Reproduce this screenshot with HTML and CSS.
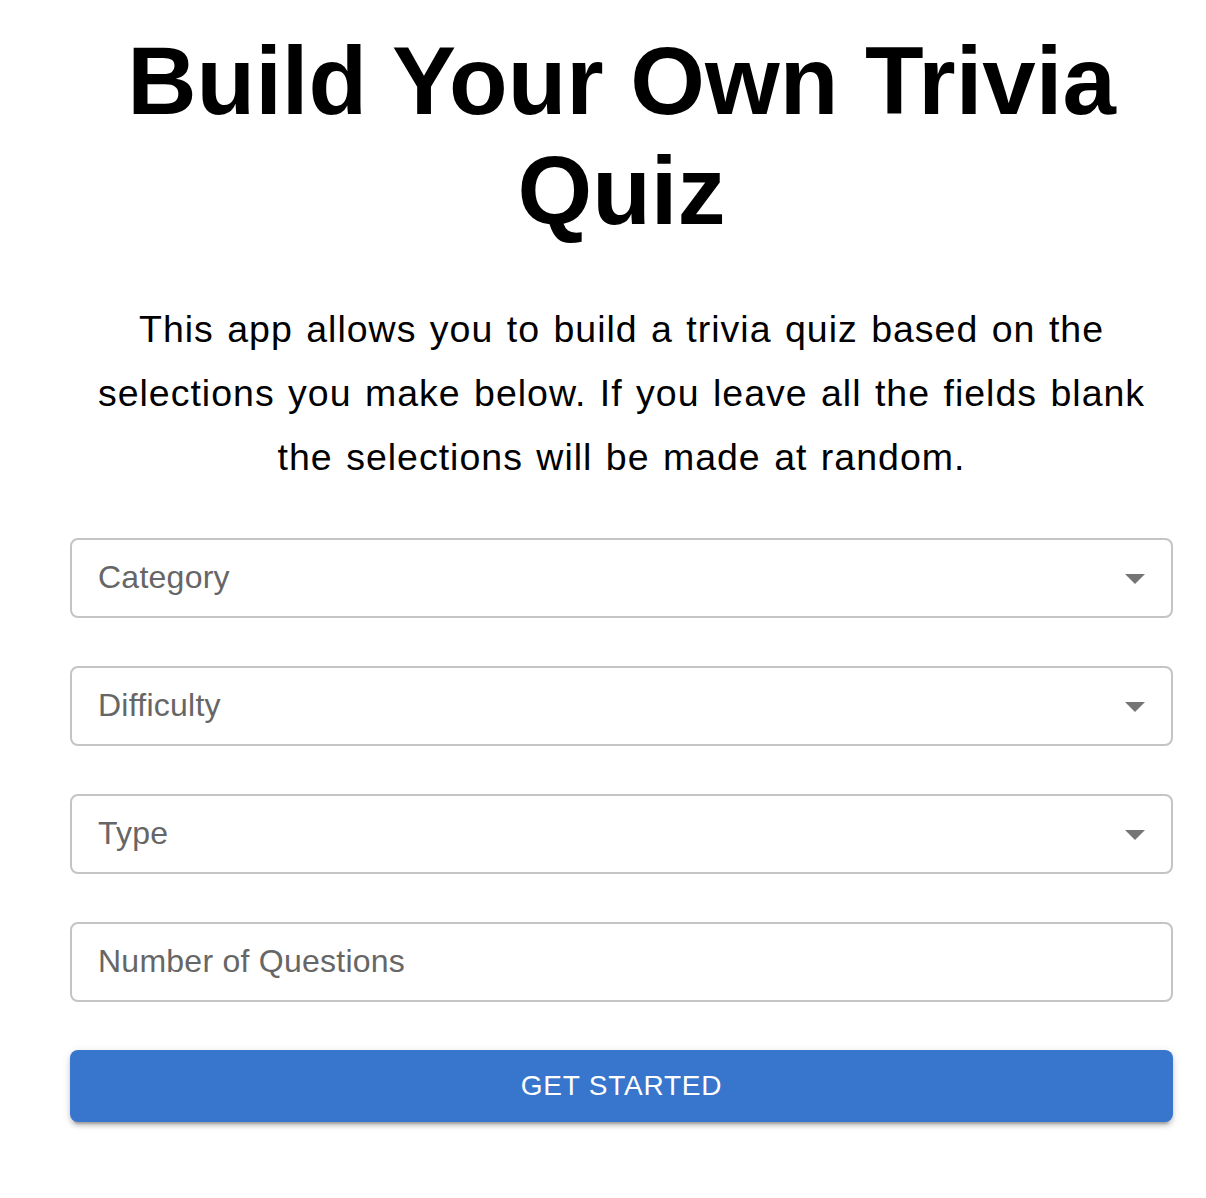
FILE: index.html
```html
<!DOCTYPE html>
<html lang="en">
<head>
<meta charset="utf-8">
<title>Build Your Own Trivia Quiz</title>
<link rel="stylesheet" href="styles.css">
</head>
<body>
<main class="page">
  <h1 class="title">Build Your Own Trivia Quiz</h1>
  <p class="intro">This app allows you to build a trivia quiz based on the selections you make below. If you leave all the fields blank the selections will be made at random.</p>
  <form class="quiz-form">
    <div class="field field-select">
      <span class="field-label">Category</span>
      <svg class="field-arrow" viewBox="0 0 24 24" aria-hidden="true"><path d="M7 10l5 5 5-5z"/></svg>
    </div>
    <div class="field field-select">
      <span class="field-label">Difficulty</span>
      <svg class="field-arrow" viewBox="0 0 24 24" aria-hidden="true"><path d="M7 10l5 5 5-5z"/></svg>
    </div>
    <div class="field field-select">
      <span class="field-label">Type</span>
      <svg class="field-arrow" viewBox="0 0 24 24" aria-hidden="true"><path d="M7 10l5 5 5-5z"/></svg>
    </div>
    <div class="field">
      <span class="field-label">Number of Questions</span>
    </div>
    <button type="button" class="start-button">Get Started</button>
  </form>
</main>
</body>
</html>
```

FILE: styles.css
```css
html, body {
  margin: 0;
  padding: 0;
  background: #ffffff;
}

body {
  font-family: "Liberation Sans", Arial, Helvetica, sans-serif;
  color: #000000;
}

.page {
  padding: 26px 33px 40px 70px;
}

.title {
  margin: 0;
  font-size: 96px;
  line-height: 110px;
  font-weight: 700;
  text-align: center;
}

.intro {
  max-width: 1080px;
  margin: 51px auto 0;
  font-size: 37.5px;
  line-height: 64px;
  letter-spacing: 1px;
  word-spacing: 2px;
  text-align: center;
}

.quiz-form {
  margin-top: 49px;
  display: flex;
  flex-direction: column;
  gap: 48px;
}

.field {
  box-sizing: border-box;
  height: 80px;
  border: 2px solid #c4c4c4;
  border-radius: 8px;
  display: flex;
  align-items: center;
  padding: 0 14px 0 26px;
}

.field-label {
  flex: 1;
  font-size: 32px;
  line-height: 40px;
  letter-spacing: 0.25px;
  color: #666666;
  margin-top: -2px;
}

.field-arrow {
  width: 48px;
  height: 48px;
  fill: #757575;
  flex: none;
  margin-right: -2px;
}

.start-button {
  height: 72px;
  border: none;
  border-radius: 8px;
  background: #3875cc;
  color: #ffffff;
  font-family: "Liberation Sans", Arial, Helvetica, sans-serif;
  font-size: 28px;
  letter-spacing: 0.8px;
  text-transform: uppercase;
  box-shadow: 0 6px 2px -4px rgba(0,0,0,0.2), 0 4px 4px 0 rgba(0,0,0,0.14), 0 2px 10px 0 rgba(0,0,0,0.12);
  cursor: pointer;
}
```
